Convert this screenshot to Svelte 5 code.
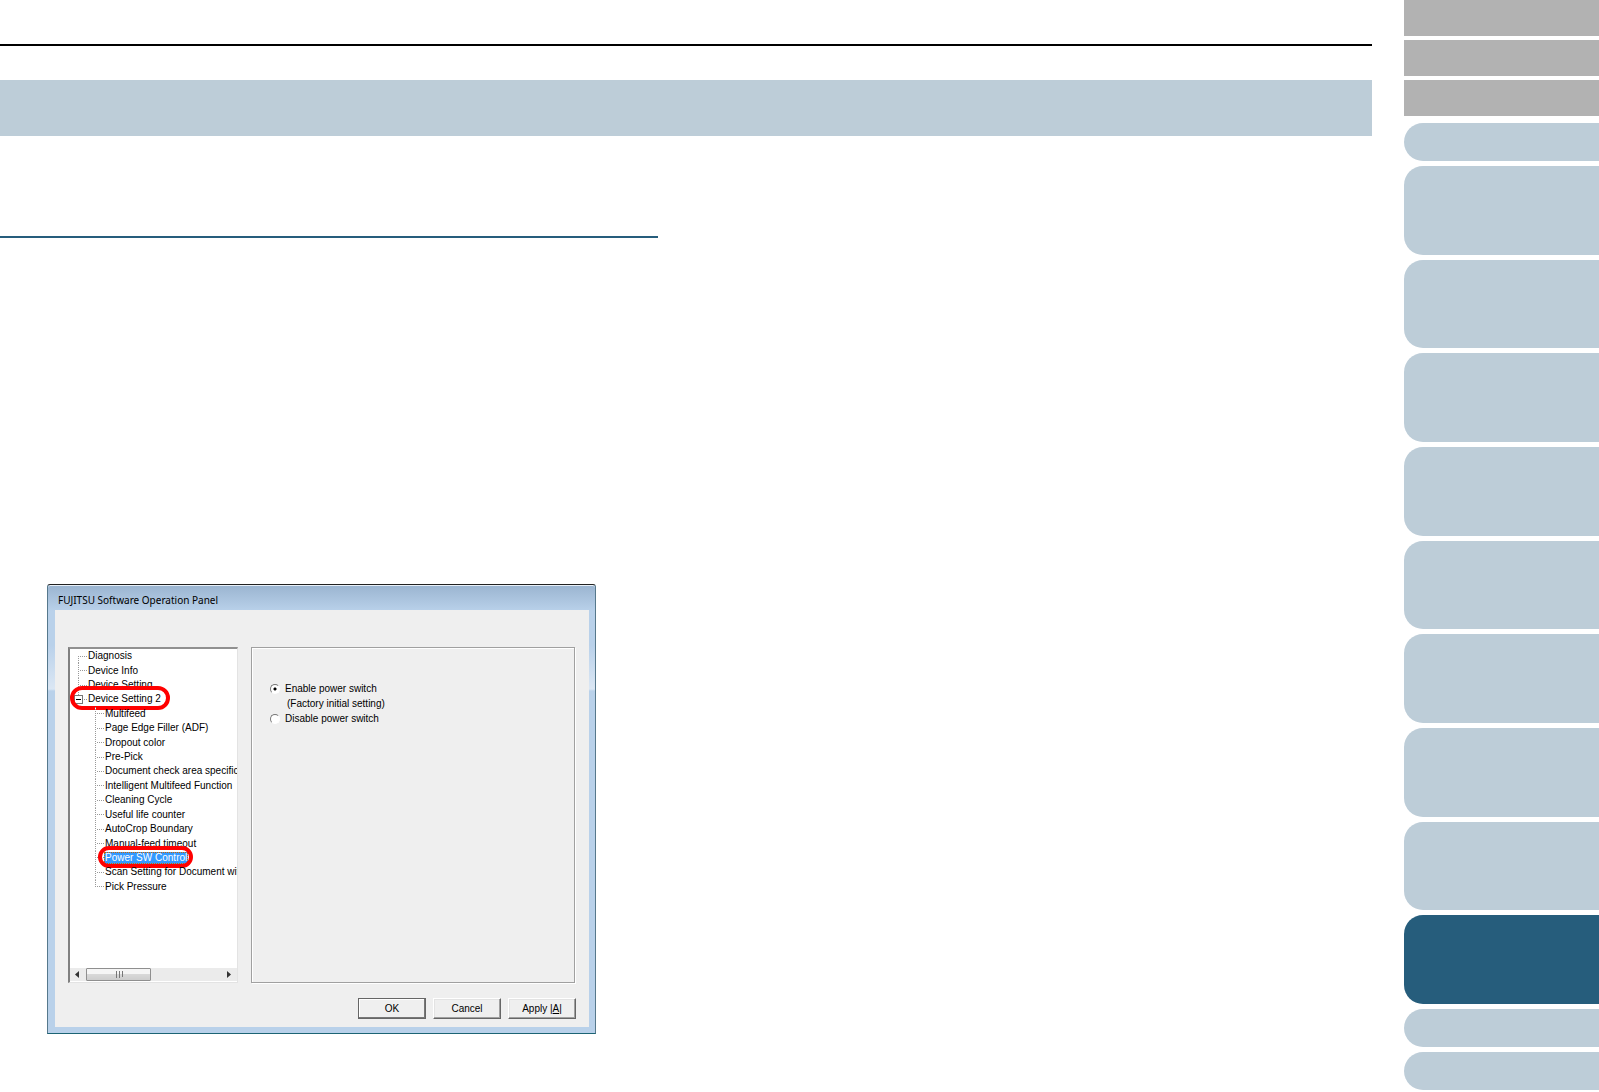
<script lang="ts">
    interface TreeItem {
        label: string;
        child?: boolean;
        open?: boolean;
        circled?: boolean;
    }

    const items: TreeItem[] = [
        { label: 'Diagnosis' },
        { label: 'Device Info' },
        { label: 'Device Setting' },
        { label: 'Device Setting 2', open: true, circled: true },
        { label: 'Multifeed', child: true },
        { label: 'Page Edge Filler (ADF)', child: true },
        { label: 'Dropout color', child: true },
        { label: 'Pre-Pick', child: true },
        { label: 'Document check area specific', child: true },
        { label: 'Intelligent Multifeed Function', child: true },
        { label: 'Cleaning Cycle', child: true },
        { label: 'Useful life counter', child: true },
        { label: 'AutoCrop Boundary', child: true },
        { label: 'Manual-feed timeout', child: true },
        { label: 'Power SW Control', child: true, circled: true },
        { label: 'Scan Setting for Document wit', child: true },
        { label: 'Pick Pressure', child: true },
    ];

    /** Chapter tabs; the ninth one is the current chapter. */
    const chapters = [1, 2, 3, 4, 5, 6, 7, 8, 9];
    const current = 9;

    let selected = $state('Power SW Control');
    let power = $state('enable');
</script>



<div class="page">
    <main>
        <hr class="rule" />
        <div class="banner"></div>

        <div class="columns">
            <section>
                <hr class="section-rule" />

                <div class="window">
                    <div class="title">FUJITSU Software Operation Panel</div>

                    <div class="body">
                        <div class="panes">
                            <div class="tree">
                                <ul>
                                    {#each items as item}
                                        <li class:child={item.child}>
                                            <span class="branch">
                                                {#if item.open}
                                                    <svg width="9" height="9" viewBox="0 0 9 9">
                                                        <rect x="0.5" y="0.5" width="8" height="8" fill="#fff" stroke="#777" />
                                                        <path d="M2 4.5h5" stroke="#000" />
                                                    </svg>
                                                {/if}
                                            </span>
                                            <button
                                                class="label"
                                                class:selected={item.label === selected}
                                                onclick={() => selected = item.label}
                                            >{item.label}</button>
                                            {#if item.circled}
                                                <span class="ring"></span>
                                            {/if}
                                        </li>
                                    {/each}
                                </ul>

                                <div class="scrollbar">
                                    <svg class="arrow" width="16" height="13" viewBox="0 0 16 13">
                                        <path d="M9 3v7L5 6.5z" fill="#333" />
                                    </svg>
                                    <div class="thumb">
                                        <svg width="8" height="7" viewBox="0 0 8 7">
                                            <path d="M1.5 0v7M4.5 0v7M7.5 0v6" stroke="#777" />
                                        </svg>
                                    </div>
                                    <svg class="arrow" width="16" height="13" viewBox="0 0 16 13">
                                        <path d="M6 3v7l4-3.500z" fill="#333" />
                                    </svg>
                                </div>
                            </div>

                            <div class="panel">
                                <label>
                                    <input type="radio" name="power" value="enable" bind:group={power} />
                                    <span>Enable power switch</span>
                                    <span class="note">(Factory initial setting)</span>
                                </label>
                                <label>
                                    <input type="radio" name="power" value="disable" bind:group={power} />
                                    <span>Disable power switch</span>
                                </label>
                            </div>
                        </div>

                        <div class="buttons">
                            <button class="push default">OK</button>
                            <button class="push">Cancel</button>
                            <button class="push">Apply |<u>A</u>|</button>
                        </div>
                    </div>
                </div>
            </section>
        </div>
    </main>

    <nav>
        <div class="links">
            <a href="#top"></a>
            <a href="#contents"></a>
            <a href="#index"></a>
        </div>
        <a class="tab" href="#introduction"></a>
        <div class="chapters">
            {#each chapters as chapter}
                <a class="tab" class:current={chapter === current} href="#chapter-{chapter}"></a>
            {/each}
        </div>
        <a class="tab" href="#appendix"></a>
        <a class="tab" href="#glossary"></a>
    </nav>
</div>



<style>
    :global(body) {
        background : #fff;
    }

    .page {
        display : grid;
        grid-template-columns : minmax(0, 1fr) 195px;
        gap : 32px;
        overflow : hidden;

        color : #000;
        font : 10px/15px "Liberation Sans", Arial, sans-serif;
    }

    main {
        padding-top : 44px;
    }

    hr {
        height : 2px;
        margin : 0;
        border : none;
    }
    .rule {
        background : #000;
    }
    .section-rule {
        background : #265d7c;
    }

    .banner {
        height : 56px;
        margin-top : 34px;
        background : #bdcdd8;
    }

    .columns {
        display : grid;
        grid-template-columns : 1fr 1fr;
        gap : 56px;
        margin-top : 100px;
    }

    /* Dialog */

    .window {
        box-sizing : border-box;
        max-width : 549px;
        margin : 346px 0 0 47px;
        padding : 0 6px 6px 7px;

        background : linear-gradient(
            #9ab4d0,
            #b9d1ea 26px,
            #b9d1ea 60px,
            #dbe7f4 104px,
            #b9d1ea 106px
        );
        border : 1px solid #56788c;
        border-top-color : #222;
        border-bottom-color : #1c6474;
        border-radius : 3px 3px 0 0;
        box-shadow : inset 0 1px #e8f0f8;
    }

    .title {
        padding : 4px 3px 0;
        height : 21px;

        font : 10px/22px "Noto Sans", "Open Sans", sans-serif;
    }

    .body {
        padding : 37px 13px 8px;
        background : #efefef;
    }

    .panes {
        display : flex;
        gap : 13px;
        height : 336px;
    }

    .tree {
        display : flex;
        flex-direction : column;
        justify-content : space-between;
        box-sizing : border-box;
        width : 170px;

        background : #fff;
        border : 1px solid #e3e3e3;
        border-top : 2px solid #909090;
        border-left : 2px solid #808080;
    }

    ul {
        display : grid;
        grid-auto-rows : 1fr;
        height : 245px;
        margin : 0;
        padding : 0;
        overflow : hidden;
        list-style : none;
    }

    li {
        position : relative;
        display : flex;
        align-items : center;
        min-width : 0;
        padding-left : 8px;
        white-space : nowrap;
    }
    li.child {
        padding-left : 25px;
    }

    .branch {
        flex : none;
        display : flex;
        align-items : center;
        align-self : stretch;
        width : 9px;

        background :
            repeating-linear-gradient(#999 0 1px, #fff 1px 2px) left / 1px 100% no-repeat,
            repeating-linear-gradient(to right, #999 0 1px, #fff 1px 2px) left center / 9px 1px no-repeat;
    }
    .branch svg {
        flex : none;
        margin-left : -4px;
    }
    li:first-child .branch {
        background-position : left bottom, left center;
        background-size : 1px 50%, 9px 1px;
    }
    li:last-child .branch,
    .branch:has(svg) {
        background-position : left top, left center;
        background-size : 1px 50%, 9px 1px;
    }

    .label {
        padding : 0 1px;
        background : none;
        border : none;

        color : inherit;
        font : inherit;
        line-height : 12px;
    }
    .label.selected {
        background : #3399ff;
        outline : 1px dotted #cc6600;
        outline-offset : -1px;
        color : #fff;
    }

    .ring {
        position : absolute;
        top : -6px;
        left : 0;
        box-sizing : border-box;
        width : 100px;
        height : 24px;

        border : 4px solid #f00;
        border-radius : 12px;
        pointer-events : none;
    }
    .child .ring {
        top : -5px;
        left : 28px;
        width : 95px;
        height : 22px;
    }

    .scrollbar {
        display : flex;
        height : 13px;
        margin-bottom : 1px;
        background : #ebebeb;
    }
    .arrow {
        flex : none;
    }
    .arrow:last-child {
        margin-left : auto;
    }
    .thumb {
        display : flex;
        align-items : center;
        justify-content : center;
        box-sizing : border-box;
        width : 65px;

        background : linear-gradient(#f5f5f5 45%, #d8d8d8 50%, #cdcdcd);
        border : 1px solid #8f8f8f;
        border-radius : 1px;
    }

    .panel {
        flex : 1;
        margin-right : 1px;
        padding : 33px 18px;

        border : 1px solid #a0a0a0;
        box-shadow : inset 1px 1px #fff, 1px 1px #fff;
    }

    label {
        display : grid;
        grid-template-columns : 10px 1fr;
        column-gap : 5px;
        align-items : center;
    }
    .note {
        grid-column : 2;
        padding-left : 2px;
    }

    input {
        appearance : none;
        box-sizing : border-box;
        width : 10px;
        height : 10px;
        margin : 0;

        background : #fff;
        border : 1px solid;
        border-color : #777 #fff #fff #777;
        border-radius : 50%;
    }
    input:checked {
        background : radial-gradient(#000 0 1px, #fff 2px);
    }

    .buttons {
        display : flex;
        justify-content : flex-end;
        gap : 7px;
        margin-top : 15px;
    }

    .push {
        width : 68px;
        height : 21px;
        padding : 0;

        background : #efefef;
        border : 1px solid;
        border-color : #fff #666 #666 #fff;
        box-shadow : inset -1px -1px #a0a0a0, inset 1px 1px #e3e3e3;

        color : inherit;
        font : inherit;
    }
    .push.default {
        border-color : #666;
        box-shadow : inset -1px -1px #777, inset 1px 1px #fff;
    }

    /* Side index */

    nav {
        display : flex;
        flex-direction : column;
        gap : 5px;
    }

    .links {
        display : grid;
        gap : 4px;
        margin-bottom : 2px;
    }
    .links a {
        height : 36px;
        background : #b2b2b2;
    }

    .tab {
        min-height : 38px;
        background : #bdcdd8;
        border-radius : 19px 0 0 19px;
    }
    .tab.current {
        background : #265d7c;
    }

    .chapters {
        display : grid;
        grid-auto-rows : 1fr;
        gap : 5px;
        height : 838px;
    }
</style>
